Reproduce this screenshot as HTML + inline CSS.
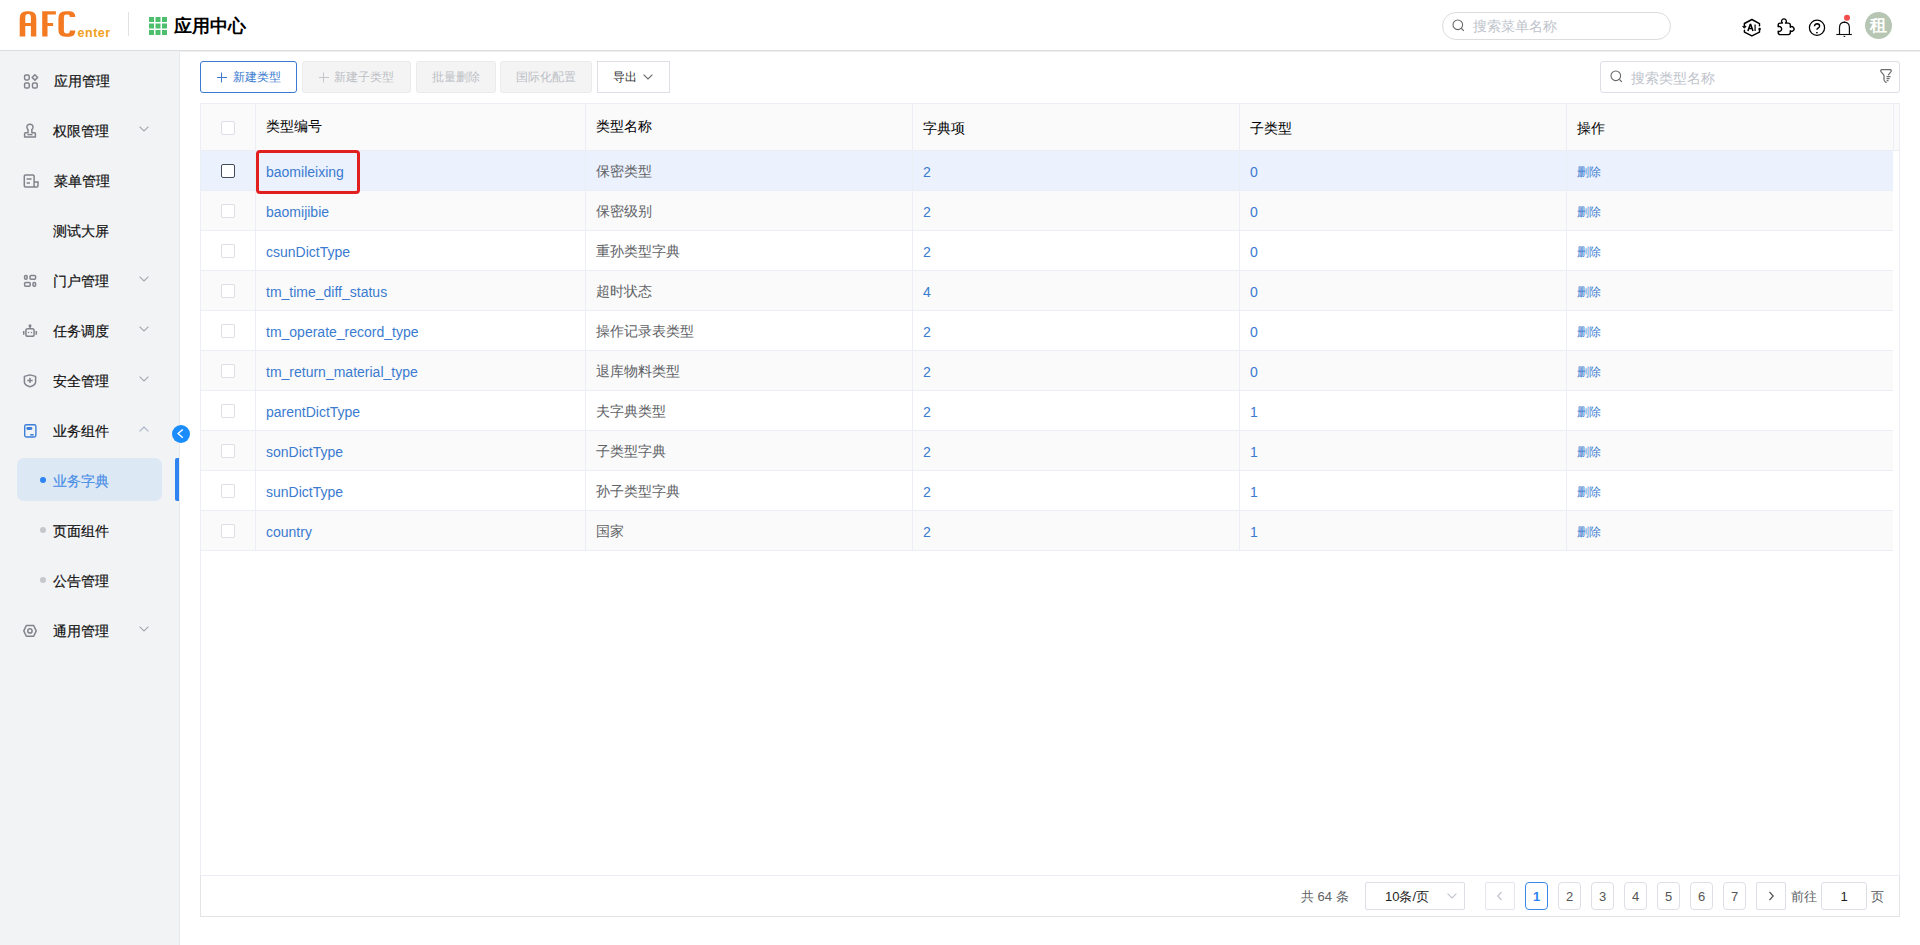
<!DOCTYPE html>
<html><head><meta charset="utf-8"><style>
*{box-sizing:border-box;margin:0;padding:0}
html,body{width:1920px;height:945px;overflow:hidden;background:#fff;font-family:"Liberation Sans",sans-serif;color:#303133}
.a{position:absolute}
svg{display:block}
</style></head><body>
<div class="a" style="left:0;top:0;width:1920px;height:50px;background:#fff"></div>
<div class="a" style="left:0;top:50px;width:1920px;height:1px;background:#dcdddf"></div>
<div class="a" style="left:0;top:51px;width:1920px;height:1px;background:#eeeff1"></div>
<svg class="a" style="left:18px;top:10px" width="96" height="28" viewBox="0 0 96 28">
<g fill="#f47a22" fill-rule="evenodd">
<path d="M1.7 26.6 V8.2 Q1.7 1.2 8.7 1.2 H11.3 Q18.3 1.2 18.3 8.2 V26.6 H12.9 V15.9 H7.3 V26.6 Z M7.3 13.1 H12.9 V6.9 Q12.9 4.0 10.1 4.0 Q7.3 4.0 7.3 6.9 Z"/>
<path d="M24.2 26.6 V1.2 H37.9 V4.6 H29.5 V13.1 H35.1 V15.9 H29.5 V26.6 Z"/>
<path d="M40.4 8.2 Q40.4 1.2 47.4 1.2 H51.3 Q57.3 1.2 57.3 6.9 H51.9 Q51.9 4.5 49.5 4.5 H48.3 Q45.9 4.5 45.9 6.9 V21.1 Q45.9 23.5 48.3 23.5 H49.5 Q51.9 23.5 51.9 20.6 H57.3 Q57.3 26.8 51.3 26.8 H47.4 Q40.4 26.8 40.4 19.8 Z"/>
</g>
<text x="59.6" y="26.6" font-family="Liberation Sans" font-weight="bold" font-size="12.5" fill="#f2a024" letter-spacing="0.5">enter</text>
</svg>
<div class="a" style="left:128px;top:12px;width:1px;height:24px;background:#e2e2e2"></div>
<svg class="a" style="left:149px;top:17px" width="18" height="18" viewBox="0 0 18 18"><g fill="#4dbf6c"><rect x="0" y="0" width="5" height="5"/><rect x="6.5" y="0" width="5" height="5"/><rect x="13" y="0" width="5" height="5"/><rect x="0" y="6.5" width="5" height="5"/><rect x="6.5" y="6.5" width="5" height="5"/><rect x="13" y="6.5" width="5" height="5"/><rect x="0" y="13" width="5" height="5"/><rect x="6.5" y="13" width="5" height="5"/><rect x="13" y="13" width="5" height="5"/></g></svg>
<div class="a" style="left:174px;top:15px;font-size:18px;font-weight:bold;color:#000;line-height:22px;white-space:nowrap">应用中心</div>
<div class="a" style="left:1442px;top:12px;width:229px;height:28px;border:1px solid #dcdcdc;border-radius:14px"></div>
<svg class="a" style="left:1452px;top:19px" width="13" height="13" viewBox="0 0 13 13"><circle cx="5.8" cy="5.8" r="4.8" fill="none" stroke="#666" stroke-width="1.1"/><path d="M9.3 9.3 L11.8 11.8" stroke="#666" stroke-width="1.2"/></svg>
<div class="a" style="left:1473px;top:17px;font-size:14px;line-height:18px;color:#c0c4cc;white-space:nowrap">搜索菜单名称</div>
<svg class="a" style="left:1738px;top:14px" width="30" height="28" viewBox="0 0 30 28" fill="none" stroke="#000" stroke-width="1.45" stroke-linejoin="round" stroke-linecap="round">
<path d="M6.4 11.6 V9.5 L13.9 5.5 L21.5 9.6 V11.8"/><path d="M21.5 16.2 V18.1 L13.9 21.9 L6.4 18.1 V16.2"/>
<path d="M5 12.6 L6.4 14.2 L7.8 12.6 Z" fill="#000" stroke-width="1"/><circle cx="21.6" cy="15.1" r="1.3" fill="#000" stroke="none"/>
<path d="M9.9 16.9 L12.2 10.4 H12.7 L15 16.9 M10.8 14.4 H14.1" stroke-width="1.5" stroke-linecap="butt" stroke-linejoin="miter"/><path d="M17.1 10.4 V16.9" stroke-width="1.4" stroke="#222" stroke-linecap="butt"/>
</svg>
<svg class="a" style="left:1772px;top:14px" width="30" height="28" viewBox="0 0 30 28" fill="none" stroke="#000" stroke-width="1.4" stroke-linejoin="round">
<path d="M10.4 9.1 A2.4 2.4 0 1 1 13.5 9.1 H16.3 Q18.3 9.1 18.3 11.1 V13.2 A2.29 2.29 0 1 1 18.3 16.8 V18.6 Q18.3 20.6 16.3 20.6 H8.2 Q6.2 20.6 6.2 18.6 V17.2 A2.47 2.47 0 1 0 6.2 12.7 V11.1 Q6.2 9.1 8.2 9.1 Z"/>
</svg>
<svg class="a" style="left:1803px;top:12px" width="30" height="28" viewBox="0 0 30 28" fill="none" stroke="#000" stroke-width="1.25">
<circle cx="14" cy="15.8" r="7.6"/><path d="M11.5 14.3 Q11.6 11.8 14.1 11.7 Q16.6 11.8 16.6 13.9 Q16.6 15.3 15.1 16.1 Q13.9 16.8 13.9 17.8" stroke-width="1.4"/><path d="M13.1 20.6 H14.7" stroke-width="1.4"/>
</svg>
<svg class="a" style="left:1830px;top:10px" width="30" height="30" viewBox="0 0 30 30" fill="none" stroke="#111" stroke-width="1.2">
<path d="M9.5 24.4 V17.5 Q9.5 12.6 14.4 12.2 Q19.4 12.6 19.4 17.5 V24.4"/><path d="M6.3 24.5 H21.9" stroke-width="1.1"/><circle cx="14.4" cy="12.3" r="0.7" fill="#000" stroke="none"/><path d="M13.6 26.4 H15.2" stroke-width="1.1"/>
<circle cx="17" cy="7.8" r="3" fill="#f24c4c" stroke="none"/>
</svg>
<div class="a" style="left:1865px;top:12px;width:27px;height:27px;border-radius:50%;background:#b6c6b2;color:#fff;font-family:&quot;Liberation Serif&quot;,serif;font-size:17px;font-weight:bold;line-height:27px;text-align:center">租</div>
<div class="a" style="left:0;top:51px;width:179px;height:894px;background:#f2f3f5"></div>
<div class="a" style="left:179px;top:51px;width:1px;height:894px;background:#e8e9eb"></div>
<div class="a" style="left:17px;top:458px;width:145px;height:43px;border-radius:7px;background:#dde8f5"></div>
<div class="a" style="left:175px;top:458px;width:4px;height:43px;border-radius:2px 0 0 2px;background:#2d84f2"></div>
<div class="a" style="left:54px;top:71px;font-size:14px;line-height:20px;color:#111;white-space:nowrap;-webkit-text-stroke:0.2px #111">应用管理</div>
<svg class="a" style="left:15px;top:65px" width="30" height="30" viewBox="0 0 30 30" fill="none" stroke="#80848c" stroke-width="1.5"><rect x="9.6" y="9.9" width="4.6" height="5" rx="1.3"/><path d="M19.9 9.75 L22.65 12.45 L19.9 15.15 L17.15 12.45 Z" stroke-linejoin="round"/><rect x="9.6" y="18" width="4.6" height="5" rx="1.3"/><rect x="17.5" y="18" width="4.7" height="5" rx="1.3"/></svg>
<div class="a" style="left:53px;top:121px;font-size:14px;line-height:20px;color:#111;white-space:nowrap;-webkit-text-stroke:0.2px #111">权限管理</div>
<svg class="a" style="left:15px;top:115px" width="30" height="30" viewBox="0 0 30 30" fill="none" stroke="#80848c" stroke-width="1.5"><path d="M13.1 14.6 A3.05 3.05 0 1 1 16.8 14.6 L16.9 17.8 H19.6 Q20.4 17.8 20.4 18.6 V22 H9.6 V18.6 Q9.6 17.8 10.4 17.8 H13 Z" stroke-linejoin="round"/><path d="M12.5 19.6 H17.5"/></svg>
<svg class="a" style="left:139px;top:126px" width="10" height="6" viewBox="0 0 10 6"><path d="M0.6 0.6 L5 5 L9.4 0.6" fill="none" stroke="#a3a6ad" stroke-width="1.1"/></svg>
<div class="a" style="left:54px;top:171px;font-size:14px;line-height:20px;color:#111;white-space:nowrap;-webkit-text-stroke:0.2px #111">菜单管理</div>
<svg class="a" style="left:15px;top:165px" width="30" height="30" viewBox="0 0 30 30" fill="none" stroke="#80848c" stroke-width="1.5"><path d="M19.1 22 H10.5 Q9.3 22 9.3 20.8 V11.1 Q9.3 9.9 10.5 9.9 H17.9 Q19.1 9.9 19.1 11.1 V22 H21.8 Q23 22 23 20.8 V17 H19.1"/><path d="M11.6 14 H16.6 M11.6 18.1 H15"/></svg>
<div class="a" style="left:53px;top:221px;font-size:14px;line-height:20px;color:#111;white-space:nowrap;-webkit-text-stroke:0.2px #111">测试大屏</div>
<div class="a" style="left:53px;top:271px;font-size:14px;line-height:20px;color:#111;white-space:nowrap;-webkit-text-stroke:0.2px #111">门户管理</div>
<svg class="a" style="left:15px;top:265px" width="30" height="30" viewBox="0 0 30 30" fill="none" stroke="#80848c" stroke-width="1.5"><rect x="9.6" y="10.4" width="2.5" height="3.8" rx="1.1"/><rect x="15" y="10.4" width="5.6" height="3.8" rx="1.1"/><rect x="9.6" y="17.4" width="5.6" height="3.8" rx="1.1"/><rect x="18" y="17.4" width="2.6" height="3.8" rx="1.1"/></svg>
<svg class="a" style="left:139px;top:276px" width="10" height="6" viewBox="0 0 10 6"><path d="M0.6 0.6 L5 5 L9.4 0.6" fill="none" stroke="#a3a6ad" stroke-width="1.1"/></svg>
<div class="a" style="left:53px;top:321px;font-size:14px;line-height:20px;color:#111;white-space:nowrap;-webkit-text-stroke:0.2px #111">任务调度</div>
<svg class="a" style="left:15px;top:315px" width="30" height="30" viewBox="0 0 30 30" fill="none" stroke="#80848c" stroke-width="1.5"><rect x="10.9" y="13.7" width="8.2" height="7.5" rx="1.8"/><path d="M15 11.5 V13.7 M8.7 15.9 V19.7 M21.3 15.9 V19.7" stroke-width="1.5"/><circle cx="15" cy="10.8" r="1.5" fill="#80848c" stroke="none"/><circle cx="13.5" cy="17.6" r="0.75" fill="#80848c" stroke="none"/><circle cx="16.5" cy="17.6" r="0.75" fill="#80848c" stroke="none"/></svg>
<svg class="a" style="left:139px;top:326px" width="10" height="6" viewBox="0 0 10 6"><path d="M0.6 0.6 L5 5 L9.4 0.6" fill="none" stroke="#a3a6ad" stroke-width="1.1"/></svg>
<div class="a" style="left:53px;top:371px;font-size:14px;line-height:20px;color:#111;white-space:nowrap;-webkit-text-stroke:0.2px #111">安全管理</div>
<svg class="a" style="left:15px;top:365px" width="30" height="30" viewBox="0 0 30 30" fill="none" stroke="#80848c" stroke-width="1.5"><path d="M9.4 11.4 L15 9.9 L20.6 11.4 V17.2 Q20.6 19.9 15 21.8 Q9.4 19.9 9.4 17.2 Z" stroke-linejoin="round"/><path d="M12.3 15.4 H17.7 M15 12.7 V18.1" stroke-width="1.5"/></svg>
<svg class="a" style="left:139px;top:376px" width="10" height="6" viewBox="0 0 10 6"><path d="M0.6 0.6 L5 5 L9.4 0.6" fill="none" stroke="#a3a6ad" stroke-width="1.1"/></svg>
<div class="a" style="left:53px;top:421px;font-size:14px;line-height:20px;color:#111;white-space:nowrap;-webkit-text-stroke:0.2px #111">业务组件</div>
<svg class="a" style="left:15px;top:415px" width="30" height="30" viewBox="0 0 30 30" fill="none" stroke="#3b7fd9" stroke-width="1.4"><rect x="9.7" y="9.7" width="11.2" height="12.3" rx="1.7"/><rect x="12" y="12.8" width="4.7" height="1.4" rx="0.7"/><path d="M15.2 19.8 H18.7" stroke-width="1.5"/></svg>
<svg class="a" style="left:139px;top:426px" width="10" height="6" viewBox="0 0 10 6"><path d="M0.6 5.4 L5 1 L9.4 5.4" fill="none" stroke="#a5b0c6" stroke-width="1.1"/></svg>
<div class="a" style="left:53px;top:471px;font-size:14px;line-height:20px;color:#4a8fe6;white-space:nowrap;-webkit-text-stroke:0.2px #4a8fe6">业务字典</div>
<div class="a" style="left:40px;top:477px;width:6px;height:6px;border-radius:50%;background:#2d84f2"></div>
<div class="a" style="left:53px;top:521px;font-size:14px;line-height:20px;color:#111;white-space:nowrap;-webkit-text-stroke:0.2px #111">页面组件</div>
<div class="a" style="left:40px;top:527px;width:6px;height:6px;border-radius:50%;background:#c6c7ca"></div>
<div class="a" style="left:53px;top:571px;font-size:14px;line-height:20px;color:#111;white-space:nowrap;-webkit-text-stroke:0.2px #111">公告管理</div>
<div class="a" style="left:40px;top:577px;width:6px;height:6px;border-radius:50%;background:#c6c7ca"></div>
<div class="a" style="left:53px;top:621px;font-size:14px;line-height:20px;color:#111;white-space:nowrap;-webkit-text-stroke:0.2px #111">通用管理</div>
<svg class="a" style="left:15px;top:615px" width="30" height="30" viewBox="0 0 30 30" fill="none" stroke="#80848c" stroke-width="1.5"><path d="M11.3 10.5 H18.7 L21.2 15.9 L18.7 21.3 H11.3 L8.8 15.9 Z" stroke-linejoin="round"/><circle cx="14.95" cy="15.9" r="2.15"/></svg>
<svg class="a" style="left:139px;top:626px" width="10" height="6" viewBox="0 0 10 6"><path d="M0.6 0.6 L5 5 L9.4 0.6" fill="none" stroke="#a3a6ad" stroke-width="1.1"/></svg>
<div class="a" style="left:172px;top:425px;width:18px;height:18px;border-radius:50%;background:#1b8cfb"></div>
<svg class="a" style="left:172px;top:425px" width="18" height="18" viewBox="0 0 18 18"><path d="M10.8 4.4 L6.1 8.6 L10.8 12.8" fill="none" stroke="#fff" stroke-width="1.4"/></svg>
<div class="a" style="left:200px;top:61px;width:97px;height:32px;border:1px solid #3a7bd0;border-radius:3px;color:#3a7bd0;background:#fff;font-size:12px;line-height:30px;text-align:center;white-space:nowrap"></div>
<div class="a" style="left:302px;top:61px;width:109px;height:32px;border:1px solid #ebebed;border-radius:3px;color:#bcbfc4;background:#f4f4f5;font-size:12px;line-height:30px;text-align:center;white-space:nowrap"></div>
<div class="a" style="left:416px;top:61px;width:80px;height:32px;border:1px solid #ebebed;border-radius:3px;color:#bcbfc4;background:#f4f4f5;font-size:12px;line-height:30px;text-align:center;white-space:nowrap"></div>
<div class="a" style="left:500px;top:61px;width:92px;height:32px;border:1px solid #ebebed;border-radius:3px;color:#bcbfc4;background:#f4f4f5;font-size:12px;line-height:30px;text-align:center;white-space:nowrap"></div>
<div class="a" style="left:597px;top:61px;width:73px;height:32px;border:1px solid #dcdfe6;background:#fff;font-size:12px;line-height:30px;text-align:center;white-space:nowrap"></div>
<svg class="a" style="left:216px;top:72px" width="12" height="12" viewBox="0 0 12 12"><path d="M1 5.5 H11 M5.5 0.5 V10.5" stroke="#3a7bd0" stroke-width="1"/></svg>
<div class="a" style="left:233px;top:68px;font-size:12px;line-height:18px;color:#3a7bd0;white-space:nowrap">新建类型</div>
<svg class="a" style="left:318px;top:72px" width="12" height="12" viewBox="0 0 12 12"><path d="M1 5.5 H11 M5.5 0.5 V10.5" stroke="#c4c6cb" stroke-width="1"/></svg>
<div class="a" style="left:334px;top:68px;font-size:12px;line-height:18px;color:#bcbfc4;white-space:nowrap">新建子类型</div>
<div class="a" style="left:432px;top:68px;font-size:12px;line-height:18px;color:#bcbfc4;white-space:nowrap">批量删除</div>
<div class="a" style="left:516px;top:68px;font-size:12px;line-height:18px;color:#bcbfc4;white-space:nowrap">国际化配置</div>
<div class="a" style="left:613px;top:68px;font-size:12px;line-height:18px;color:#303133">导出</div>
<svg class="a" style="left:643px;top:74px" width="10" height="6" viewBox="0 0 10 6"><path d="M0.6 0.6 L5 5 L9.4 0.6" fill="none" stroke="#666" stroke-width="1.1"/></svg>
<div class="a" style="left:1600px;top:61px;width:300px;height:32px;border:1px solid #dcdfe6;border-radius:3px"></div>
<svg class="a" style="left:1610px;top:70px" width="13" height="13" viewBox="0 0 13 13"><circle cx="5.8" cy="5.8" r="4.8" fill="none" stroke="#666" stroke-width="1.1"/><path d="M9.3 9.3 L11.8 11.8" stroke="#666" stroke-width="1.2"/></svg>
<div class="a" style="left:1631px;top:69px;font-size:14px;line-height:18px;color:#c0c4cc;white-space:nowrap">搜索类型名称</div>
<svg class="a" style="left:1874px;top:64px" width="24" height="24" viewBox="0 0 24 24" fill="none" stroke="#6e6e6e" stroke-width="1.25" stroke-linejoin="round" stroke-linecap="round">
<path d="M14.4 10.8 L17 7.7 Q17.8 6.4 16.3 5.6 H7.7 Q6.2 6.4 7 7.7 L9.5 10.7 Q10 11.3 10 12 V16 Q10.2 17.4 12.1 18.4"/><path d="M12.5 12.5 H16.6 M12.5 14.5 H15.6 M12.6 16.5 H14.5" stroke-linecap="butt"/>
</svg>
<div class="a" style="left:200px;top:103px;width:1700px;height:773px;border:1px solid #ebeef5"></div>
<div class="a" style="left:201px;top:104px;width:1698px;height:46px;background:#fafafa"></div>
<div class="a" style="left:201px;top:150px;width:1698px;height:1px;background:#ebeef5"></div>
<div class="a" style="left:255px;top:104px;width:1px;height:46px;background:#ebeef5"></div>
<div class="a" style="left:585px;top:104px;width:1px;height:46px;background:#ebeef5"></div>
<div class="a" style="left:912px;top:104px;width:1px;height:46px;background:#ebeef5"></div>
<div class="a" style="left:1239px;top:104px;width:1px;height:46px;background:#ebeef5"></div>
<div class="a" style="left:1566px;top:104px;width:1px;height:46px;background:#ebeef5"></div>
<div class="a" style="left:1893px;top:104px;width:1px;height:46px;background:#ebeef5"></div>
<div class="a" style="left:266px;top:116px;font-size:14px;line-height:20px;color:#000;white-space:nowrap">类型编号</div>
<div class="a" style="left:596px;top:116px;font-size:14px;line-height:20px;color:#000;white-space:nowrap">类型名称</div>
<div class="a" style="left:923px;top:118px;font-size:14px;line-height:20px;color:#000;white-space:nowrap">字典项</div>
<div class="a" style="left:1250px;top:118px;font-size:14px;line-height:20px;color:#000;white-space:nowrap">子类型</div>
<div class="a" style="left:1577px;top:118px;font-size:14px;line-height:20px;color:#000;white-space:nowrap">操作</div>
<div class="a" style="left:221px;top:121px;width:14px;height:14px;border:1px solid #dcdfe6;border-radius:2px;background:#fff"></div>
<div class="a" style="left:201px;top:151px;width:1692px;height:39px;background:#ebf1fd"></div>
<div class="a" style="left:201px;top:190px;width:1692px;height:1px;background:#ebeef5"></div>
<div class="a" style="left:255px;top:151px;width:1px;height:40px;background:#ebeef5"></div>
<div class="a" style="left:585px;top:151px;width:1px;height:40px;background:#ebeef5"></div>
<div class="a" style="left:912px;top:151px;width:1px;height:40px;background:#ebeef5"></div>
<div class="a" style="left:1239px;top:151px;width:1px;height:40px;background:#ebeef5"></div>
<div class="a" style="left:1566px;top:151px;width:1px;height:40px;background:#ebeef5"></div>
<div class="a" style="left:221px;top:164px;width:14px;height:14px;border:1px solid #444c5a;border-radius:2px;background:#fff"></div>
<div class="a" style="left:266px;top:162px;font-size:14px;line-height:20px;color:#3a7bd0;white-space:nowrap">baomileixing</div>
<div class="a" style="left:596px;top:161px;font-size:14px;line-height:20px;color:#606266;white-space:nowrap">保密类型</div>
<div class="a" style="left:923px;top:162px;font-size:14px;line-height:20px;color:#3a7bd0;white-space:nowrap">2</div>
<div class="a" style="left:1250px;top:162px;font-size:14px;line-height:20px;color:#3a7bd0;white-space:nowrap">0</div>
<div class="a" style="left:1577px;top:162px;font-size:12px;line-height:20px;color:#3a7bd0;white-space:nowrap">删除</div>
<div class="a" style="left:201px;top:191px;width:1692px;height:39px;background:#fafafa"></div>
<div class="a" style="left:201px;top:230px;width:1692px;height:1px;background:#ebeef5"></div>
<div class="a" style="left:255px;top:191px;width:1px;height:40px;background:#ebeef5"></div>
<div class="a" style="left:585px;top:191px;width:1px;height:40px;background:#ebeef5"></div>
<div class="a" style="left:912px;top:191px;width:1px;height:40px;background:#ebeef5"></div>
<div class="a" style="left:1239px;top:191px;width:1px;height:40px;background:#ebeef5"></div>
<div class="a" style="left:1566px;top:191px;width:1px;height:40px;background:#ebeef5"></div>
<div class="a" style="left:221px;top:204px;width:14px;height:14px;border:1px solid #dcdfe6;border-radius:2px;background:#fff"></div>
<div class="a" style="left:266px;top:202px;font-size:14px;line-height:20px;color:#3a7bd0;white-space:nowrap">baomijibie</div>
<div class="a" style="left:596px;top:201px;font-size:14px;line-height:20px;color:#606266;white-space:nowrap">保密级别</div>
<div class="a" style="left:923px;top:202px;font-size:14px;line-height:20px;color:#3a7bd0;white-space:nowrap">2</div>
<div class="a" style="left:1250px;top:202px;font-size:14px;line-height:20px;color:#3a7bd0;white-space:nowrap">0</div>
<div class="a" style="left:1577px;top:202px;font-size:12px;line-height:20px;color:#3a7bd0;white-space:nowrap">删除</div>
<div class="a" style="left:201px;top:231px;width:1692px;height:39px;background:#fff"></div>
<div class="a" style="left:201px;top:270px;width:1692px;height:1px;background:#ebeef5"></div>
<div class="a" style="left:255px;top:231px;width:1px;height:40px;background:#ebeef5"></div>
<div class="a" style="left:585px;top:231px;width:1px;height:40px;background:#ebeef5"></div>
<div class="a" style="left:912px;top:231px;width:1px;height:40px;background:#ebeef5"></div>
<div class="a" style="left:1239px;top:231px;width:1px;height:40px;background:#ebeef5"></div>
<div class="a" style="left:1566px;top:231px;width:1px;height:40px;background:#ebeef5"></div>
<div class="a" style="left:221px;top:244px;width:14px;height:14px;border:1px solid #dcdfe6;border-radius:2px;background:#fff"></div>
<div class="a" style="left:266px;top:242px;font-size:14px;line-height:20px;color:#3a7bd0;white-space:nowrap">csunDictType</div>
<div class="a" style="left:596px;top:241px;font-size:14px;line-height:20px;color:#606266;white-space:nowrap">重孙类型字典</div>
<div class="a" style="left:923px;top:242px;font-size:14px;line-height:20px;color:#3a7bd0;white-space:nowrap">2</div>
<div class="a" style="left:1250px;top:242px;font-size:14px;line-height:20px;color:#3a7bd0;white-space:nowrap">0</div>
<div class="a" style="left:1577px;top:242px;font-size:12px;line-height:20px;color:#3a7bd0;white-space:nowrap">删除</div>
<div class="a" style="left:201px;top:271px;width:1692px;height:39px;background:#fafafa"></div>
<div class="a" style="left:201px;top:310px;width:1692px;height:1px;background:#ebeef5"></div>
<div class="a" style="left:255px;top:271px;width:1px;height:40px;background:#ebeef5"></div>
<div class="a" style="left:585px;top:271px;width:1px;height:40px;background:#ebeef5"></div>
<div class="a" style="left:912px;top:271px;width:1px;height:40px;background:#ebeef5"></div>
<div class="a" style="left:1239px;top:271px;width:1px;height:40px;background:#ebeef5"></div>
<div class="a" style="left:1566px;top:271px;width:1px;height:40px;background:#ebeef5"></div>
<div class="a" style="left:221px;top:284px;width:14px;height:14px;border:1px solid #dcdfe6;border-radius:2px;background:#fff"></div>
<div class="a" style="left:266px;top:282px;font-size:14px;line-height:20px;color:#3a7bd0;white-space:nowrap">tm_time_diff_status</div>
<div class="a" style="left:596px;top:281px;font-size:14px;line-height:20px;color:#606266;white-space:nowrap">超时状态</div>
<div class="a" style="left:923px;top:282px;font-size:14px;line-height:20px;color:#3a7bd0;white-space:nowrap">4</div>
<div class="a" style="left:1250px;top:282px;font-size:14px;line-height:20px;color:#3a7bd0;white-space:nowrap">0</div>
<div class="a" style="left:1577px;top:282px;font-size:12px;line-height:20px;color:#3a7bd0;white-space:nowrap">删除</div>
<div class="a" style="left:201px;top:311px;width:1692px;height:39px;background:#fff"></div>
<div class="a" style="left:201px;top:350px;width:1692px;height:1px;background:#ebeef5"></div>
<div class="a" style="left:255px;top:311px;width:1px;height:40px;background:#ebeef5"></div>
<div class="a" style="left:585px;top:311px;width:1px;height:40px;background:#ebeef5"></div>
<div class="a" style="left:912px;top:311px;width:1px;height:40px;background:#ebeef5"></div>
<div class="a" style="left:1239px;top:311px;width:1px;height:40px;background:#ebeef5"></div>
<div class="a" style="left:1566px;top:311px;width:1px;height:40px;background:#ebeef5"></div>
<div class="a" style="left:221px;top:324px;width:14px;height:14px;border:1px solid #dcdfe6;border-radius:2px;background:#fff"></div>
<div class="a" style="left:266px;top:322px;font-size:14px;line-height:20px;color:#3a7bd0;white-space:nowrap">tm_operate_record_type</div>
<div class="a" style="left:596px;top:321px;font-size:14px;line-height:20px;color:#606266;white-space:nowrap">操作记录表类型</div>
<div class="a" style="left:923px;top:322px;font-size:14px;line-height:20px;color:#3a7bd0;white-space:nowrap">2</div>
<div class="a" style="left:1250px;top:322px;font-size:14px;line-height:20px;color:#3a7bd0;white-space:nowrap">0</div>
<div class="a" style="left:1577px;top:322px;font-size:12px;line-height:20px;color:#3a7bd0;white-space:nowrap">删除</div>
<div class="a" style="left:201px;top:351px;width:1692px;height:39px;background:#fafafa"></div>
<div class="a" style="left:201px;top:390px;width:1692px;height:1px;background:#ebeef5"></div>
<div class="a" style="left:255px;top:351px;width:1px;height:40px;background:#ebeef5"></div>
<div class="a" style="left:585px;top:351px;width:1px;height:40px;background:#ebeef5"></div>
<div class="a" style="left:912px;top:351px;width:1px;height:40px;background:#ebeef5"></div>
<div class="a" style="left:1239px;top:351px;width:1px;height:40px;background:#ebeef5"></div>
<div class="a" style="left:1566px;top:351px;width:1px;height:40px;background:#ebeef5"></div>
<div class="a" style="left:221px;top:364px;width:14px;height:14px;border:1px solid #dcdfe6;border-radius:2px;background:#fff"></div>
<div class="a" style="left:266px;top:362px;font-size:14px;line-height:20px;color:#3a7bd0;white-space:nowrap">tm_return_material_type</div>
<div class="a" style="left:596px;top:361px;font-size:14px;line-height:20px;color:#606266;white-space:nowrap">退库物料类型</div>
<div class="a" style="left:923px;top:362px;font-size:14px;line-height:20px;color:#3a7bd0;white-space:nowrap">2</div>
<div class="a" style="left:1250px;top:362px;font-size:14px;line-height:20px;color:#3a7bd0;white-space:nowrap">0</div>
<div class="a" style="left:1577px;top:362px;font-size:12px;line-height:20px;color:#3a7bd0;white-space:nowrap">删除</div>
<div class="a" style="left:201px;top:391px;width:1692px;height:39px;background:#fff"></div>
<div class="a" style="left:201px;top:430px;width:1692px;height:1px;background:#ebeef5"></div>
<div class="a" style="left:255px;top:391px;width:1px;height:40px;background:#ebeef5"></div>
<div class="a" style="left:585px;top:391px;width:1px;height:40px;background:#ebeef5"></div>
<div class="a" style="left:912px;top:391px;width:1px;height:40px;background:#ebeef5"></div>
<div class="a" style="left:1239px;top:391px;width:1px;height:40px;background:#ebeef5"></div>
<div class="a" style="left:1566px;top:391px;width:1px;height:40px;background:#ebeef5"></div>
<div class="a" style="left:221px;top:404px;width:14px;height:14px;border:1px solid #dcdfe6;border-radius:2px;background:#fff"></div>
<div class="a" style="left:266px;top:402px;font-size:14px;line-height:20px;color:#3a7bd0;white-space:nowrap">parentDictType</div>
<div class="a" style="left:596px;top:401px;font-size:14px;line-height:20px;color:#606266;white-space:nowrap">夫字典类型</div>
<div class="a" style="left:923px;top:402px;font-size:14px;line-height:20px;color:#3a7bd0;white-space:nowrap">2</div>
<div class="a" style="left:1250px;top:402px;font-size:14px;line-height:20px;color:#3a7bd0;white-space:nowrap">1</div>
<div class="a" style="left:1577px;top:402px;font-size:12px;line-height:20px;color:#3a7bd0;white-space:nowrap">删除</div>
<div class="a" style="left:201px;top:431px;width:1692px;height:39px;background:#fafafa"></div>
<div class="a" style="left:201px;top:470px;width:1692px;height:1px;background:#ebeef5"></div>
<div class="a" style="left:255px;top:431px;width:1px;height:40px;background:#ebeef5"></div>
<div class="a" style="left:585px;top:431px;width:1px;height:40px;background:#ebeef5"></div>
<div class="a" style="left:912px;top:431px;width:1px;height:40px;background:#ebeef5"></div>
<div class="a" style="left:1239px;top:431px;width:1px;height:40px;background:#ebeef5"></div>
<div class="a" style="left:1566px;top:431px;width:1px;height:40px;background:#ebeef5"></div>
<div class="a" style="left:221px;top:444px;width:14px;height:14px;border:1px solid #dcdfe6;border-radius:2px;background:#fff"></div>
<div class="a" style="left:266px;top:442px;font-size:14px;line-height:20px;color:#3a7bd0;white-space:nowrap">sonDictType</div>
<div class="a" style="left:596px;top:441px;font-size:14px;line-height:20px;color:#606266;white-space:nowrap">子类型字典</div>
<div class="a" style="left:923px;top:442px;font-size:14px;line-height:20px;color:#3a7bd0;white-space:nowrap">2</div>
<div class="a" style="left:1250px;top:442px;font-size:14px;line-height:20px;color:#3a7bd0;white-space:nowrap">1</div>
<div class="a" style="left:1577px;top:442px;font-size:12px;line-height:20px;color:#3a7bd0;white-space:nowrap">删除</div>
<div class="a" style="left:201px;top:471px;width:1692px;height:39px;background:#fff"></div>
<div class="a" style="left:201px;top:510px;width:1692px;height:1px;background:#ebeef5"></div>
<div class="a" style="left:255px;top:471px;width:1px;height:40px;background:#ebeef5"></div>
<div class="a" style="left:585px;top:471px;width:1px;height:40px;background:#ebeef5"></div>
<div class="a" style="left:912px;top:471px;width:1px;height:40px;background:#ebeef5"></div>
<div class="a" style="left:1239px;top:471px;width:1px;height:40px;background:#ebeef5"></div>
<div class="a" style="left:1566px;top:471px;width:1px;height:40px;background:#ebeef5"></div>
<div class="a" style="left:221px;top:484px;width:14px;height:14px;border:1px solid #dcdfe6;border-radius:2px;background:#fff"></div>
<div class="a" style="left:266px;top:482px;font-size:14px;line-height:20px;color:#3a7bd0;white-space:nowrap">sunDictType</div>
<div class="a" style="left:596px;top:481px;font-size:14px;line-height:20px;color:#606266;white-space:nowrap">孙子类型字典</div>
<div class="a" style="left:923px;top:482px;font-size:14px;line-height:20px;color:#3a7bd0;white-space:nowrap">2</div>
<div class="a" style="left:1250px;top:482px;font-size:14px;line-height:20px;color:#3a7bd0;white-space:nowrap">1</div>
<div class="a" style="left:1577px;top:482px;font-size:12px;line-height:20px;color:#3a7bd0;white-space:nowrap">删除</div>
<div class="a" style="left:201px;top:511px;width:1692px;height:39px;background:#fafafa"></div>
<div class="a" style="left:201px;top:550px;width:1692px;height:1px;background:#ebeef5"></div>
<div class="a" style="left:255px;top:511px;width:1px;height:40px;background:#ebeef5"></div>
<div class="a" style="left:585px;top:511px;width:1px;height:40px;background:#ebeef5"></div>
<div class="a" style="left:912px;top:511px;width:1px;height:40px;background:#ebeef5"></div>
<div class="a" style="left:1239px;top:511px;width:1px;height:40px;background:#ebeef5"></div>
<div class="a" style="left:1566px;top:511px;width:1px;height:40px;background:#ebeef5"></div>
<div class="a" style="left:221px;top:524px;width:14px;height:14px;border:1px solid #dcdfe6;border-radius:2px;background:#fff"></div>
<div class="a" style="left:266px;top:522px;font-size:14px;line-height:20px;color:#3a7bd0;white-space:nowrap">country</div>
<div class="a" style="left:596px;top:521px;font-size:14px;line-height:20px;color:#606266;white-space:nowrap">国家</div>
<div class="a" style="left:923px;top:522px;font-size:14px;line-height:20px;color:#3a7bd0;white-space:nowrap">2</div>
<div class="a" style="left:1250px;top:522px;font-size:14px;line-height:20px;color:#3a7bd0;white-space:nowrap">1</div>
<div class="a" style="left:1577px;top:522px;font-size:12px;line-height:20px;color:#3a7bd0;white-space:nowrap">删除</div>
<div class="a" style="left:1893px;top:104px;width:1px;height:46px;background:#ebeef5"></div>
<div class="a" style="left:256px;top:150px;width:104px;height:44px;border:3px solid #e21f1f;border-radius:4px"></div>
<div class="a" style="left:200px;top:875px;width:1700px;height:42px;border:1px solid #e4e4e4;border-top:1px solid #ebeef5"></div>
<div class="a" style="left:1301px;top:887px;font-size:13px;line-height:20px;color:#606266;white-space:nowrap">共 64 条</div>
<div class="a" style="left:1365px;top:882px;width:100px;height:28px;border:1px solid #dcdfe6;border-radius:2px"></div>
<div class="a" style="left:1385px;top:887px;font-size:13px;line-height:20px;color:#1f1f1f;white-space:nowrap">10条/页</div>
<svg class="a" style="left:1447px;top:893px" width="10" height="6" viewBox="0 0 10 6"><path d="M0.6 0.6 L5 5 L9.4 0.6" fill="none" stroke="#c0c4cc" stroke-width="1.1"/></svg>
<div class="a" style="left:1485px;top:882px;width:30px;height:28px;border:1px solid #e4e7ed;border-radius:2px"></div>
<svg class="a" style="left:1495px;top:891px" width="10" height="10" viewBox="0 0 10 10"><path d="M6.5 1 L2.8 5 L6.5 9" fill="none" stroke="#c0c4cc" stroke-width="1.2"/></svg>
<div class="a" style="left:1525px;top:882px;width:23px;height:28px;border:1px solid #3a86e8;border-radius:4px;font-size:13px;font-weight:bold;line-height:28px;text-align:center;color:#2d84f2">1</div>
<div class="a" style="left:1558px;top:882px;width:23px;height:28px;border:1px solid #dcdfe6;border-radius:4px;font-size:13px;line-height:28px;text-align:center;color:#555">2</div>
<div class="a" style="left:1591px;top:882px;width:23px;height:28px;border:1px solid #dcdfe6;border-radius:4px;font-size:13px;line-height:28px;text-align:center;color:#555">3</div>
<div class="a" style="left:1624px;top:882px;width:23px;height:28px;border:1px solid #dcdfe6;border-radius:4px;font-size:13px;line-height:28px;text-align:center;color:#555">4</div>
<div class="a" style="left:1657px;top:882px;width:23px;height:28px;border:1px solid #dcdfe6;border-radius:4px;font-size:13px;line-height:28px;text-align:center;color:#555">5</div>
<div class="a" style="left:1690px;top:882px;width:23px;height:28px;border:1px solid #dcdfe6;border-radius:4px;font-size:13px;line-height:28px;text-align:center;color:#555">6</div>
<div class="a" style="left:1723px;top:882px;width:23px;height:28px;border:1px solid #dcdfe6;border-radius:4px;font-size:13px;line-height:28px;text-align:center;color:#555">7</div>
<div class="a" style="left:1756px;top:882px;width:30px;height:28px;border:1px solid #dcdfe6;border-radius:2px"></div>
<svg class="a" style="left:1766px;top:891px" width="10" height="10" viewBox="0 0 10 10"><path d="M3.5 1 L7.2 5 L3.5 9" fill="none" stroke="#555" stroke-width="1.2"/></svg>
<div class="a" style="left:1791px;top:887px;font-size:13px;line-height:20px;color:#606266;white-space:nowrap">前往</div>
<div class="a" style="left:1821px;top:882px;width:46px;height:28px;border:1px solid #dcdfe6;border-radius:3px;font-size:13px;line-height:28px;text-align:center;color:#1f1f1f">1</div>
<div class="a" style="left:1871px;top:887px;font-size:13px;line-height:20px;color:#606266;white-space:nowrap">页</div>
</body></html>
